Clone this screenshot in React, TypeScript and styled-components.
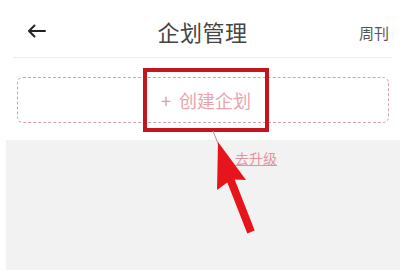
import React from 'react';
import styled, { createGlobalStyle } from 'styled-components';

const GlobalStyle = createGlobalStyle`
  html, body {
    margin: 0;
    padding: 0;
    background: #fff;
    font-family: "Noto Sans CJK SC", "Noto Sans", sans-serif;
  }
`;

export default function App() {
  return (
    <Page>
      <GlobalStyle />
      <Header>
        <Back>
          <svg width="19" height="14" viewBox="0 0 19 14">
            <path d="M18 7H2M7.5 1.5L2 7l5.5 5.5" fill="none" stroke="#222" strokeWidth="2" strokeLinecap="round" strokeLinejoin="round" />
          </svg>
        </Back>
        <Title>企划管理</Title>
        <Side>周刊</Side>
      </Header>
      <Content>
        <CreateCard>
          <CreateLabel>
            <Plus>+</Plus>创建企划
          </CreateLabel>
          <Highlight />
        </CreateCard>
      </Content>
      <Panel>
        <UpgradeLink>去升级</UpgradeLink>
      </Panel>
      <Arrow width="60" height="115" viewBox="200 128 60 115">
        <line x1="213" y1="131" x2="219" y2="146" stroke="#c98a8a" strokeWidth="1" />
        <polygon
          points="218,142 246,180 234.7,179.5 254.7,230.5 247.3,233.5 227.3,182.5 217,190"
          fill="#e8141c"
        />
      </Arrow>
    </Page>
  );
}

const Page = styled.div`
  position: relative;
  width: 405px;
  height: 270px;
  overflow: hidden;
  display: flex;
  flex-direction: column;
  background: #fff;
`;

const Header = styled.div`
  display: grid;
  grid-template-columns: 1fr auto 1fr;
  align-items: center;
  height: 58px;
  margin: 0 13px;
  border-bottom: 1px solid #ececec;
  box-sizing: border-box;
  padding: 5px 3px 0 3px;
`;

const Back = styled.div`
  display: flex;
  align-items: center;
  padding-left: 11px;
`;

const Title = styled.div`
  font-size: 22px;
  color: #444;
  letter-spacing: 0.5px;
`;

const Side = styled.div`
  justify-self: end;
  font-size: 15px;
  color: #555;
  padding-top: 2px;
`;

const Content = styled.div`
  padding: 19px 16px 0 17px;
`;

const CreateCard = styled.div`
  position: relative;
  height: 46px;
  box-sizing: border-box;
  border: 1.5px dashed #d6a0a8;
  border-radius: 6px;
  display: flex;
  align-items: center;
  justify-content: center;
`;

const CreateLabel = styled.div`
  display: flex;
  align-items: center;
  font-size: 18px;
  color: #e9a4ae;
  margin-left: 6px;
`;

const Plus = styled.span`
  font-size: 18px;
  margin-right: 8px;
  color: #d9a0a8;
`;

const Highlight = styled.div`
  position: absolute;
  left: 125px;
  top: -10px;
  width: 126px;
  height: 64px;
  box-sizing: border-box;
  border: 4px solid #c4141c;
`;

const Panel = styled.div`
  flex: 1;
  margin: 17px 5px 0 6px;
  background: #f2f2f2;
  display: flex;
  justify-content: flex-start;
  padding: 8px 0 0 229px;
`;

const UpgradeLink = styled.span`
  font-size: 14px;
  height: 19px;
  color: #e2949e;
  text-decoration: underline;
`;

const Arrow = styled.svg`
  position: absolute;
  left: 200px;
  top: 128px;
`;
